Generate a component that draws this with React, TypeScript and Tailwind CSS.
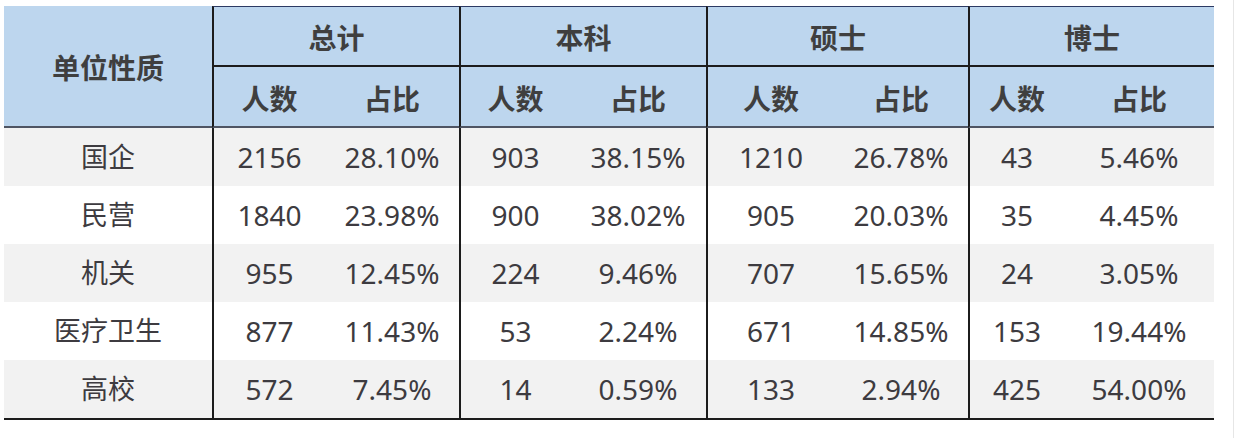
export default function App() {
  const groups = ['总计', '本科', '硕士', '博士']

  const rows = [
    { name: '国企', cells: ['2156', '28.10%', '903', '38.15%', '1210', '26.78%', '43', '5.46%'] },
    { name: '民营', cells: ['1840', '23.98%', '900', '38.02%', '905', '20.03%', '35', '4.45%'] },
    { name: '机关', cells: ['955', '12.45%', '224', '9.46%', '707', '15.65%', '24', '3.05%'] },
    { name: '医疗卫生', cells: ['877', '11.43%', '53', '2.24%', '671', '14.85%', '153', '19.44%'] },
    { name: '高校', cells: ['572', '7.45%', '14', '0.59%', '133', '2.94%', '425', '54.00%'] },
  ]

  return (
    <div className="w-[1234px] h-[438px] bg-white pt-[6px] pl-[4px] border-r border-[#e6e6e6] font-['Noto_Sans','Noto_Sans_CJK_SC',sans-serif] text-[#3d3b40]">
      <div className="grid w-[1210px] grid-cols-[208px_113px_134px_111px_136px_128px_134px_96px_150px]">
        {/* header */}
        <div className="row-span-2 h-[122px] bg-[#bdd6ee] border-b-2 border-[#4f5563] flex items-center justify-center pt-1 text-[28px] font-bold text-[#3f3f3f]">
          单位性质
        </div>
        {groups.map((g) => (
          <div
            key={g}
            className="col-span-2 h-[61px] bg-[#bdd6ee] border-t border-t-[#2c3a63] border-b-2 border-b-[#1c1c1c] border-l-2 border-l-[#1c1c1c] flex items-center justify-center pt-1 text-[28px] font-bold text-[#3f3f3f]"
          >
            {g}
          </div>
        ))}
        {groups.map((g) => (
          <div key={g + '-sub'} className="contents">
            <div className="h-[61px] bg-[#bdd6ee] border-b-2 border-b-[#4f5563] border-l-2 border-l-[#1c1c1c] flex items-center justify-center pt-1 text-[28px] font-bold text-[#3f3f3f]">
              人数
            </div>
            <div className="h-[61px] bg-[#bdd6ee] border-b-2 border-b-[#4f5563] flex items-center justify-center pt-1 text-[28px] font-bold text-[#3f3f3f]">
              占比
            </div>
          </div>
        ))}

        {/* body */}
        {rows.map((r, i) => {
          const bg = i % 2 === 0 ? 'bg-[#f2f2f2]' : 'bg-white'
          const last = i === rows.length - 1
          const h = last ? 'h-[60px] border-b-2 border-b-[#1c1c1c]' : 'h-[58px]'
          return (
            <div key={r.name} className="contents">
              <div className={`${bg} ${h} flex items-center justify-center text-[27px]`}>{r.name}</div>
              {r.cells.map((c, j) => (
                <div
                  key={j}
                  className={`${bg} ${h} ${j % 2 === 0 ? 'border-l-2 border-l-[#1c1c1c]' : ''} flex items-center justify-center text-[28px]`}
                >
                  {c}
                </div>
              ))}
            </div>
          )
        })}
      </div>
    </div>
  )
}
